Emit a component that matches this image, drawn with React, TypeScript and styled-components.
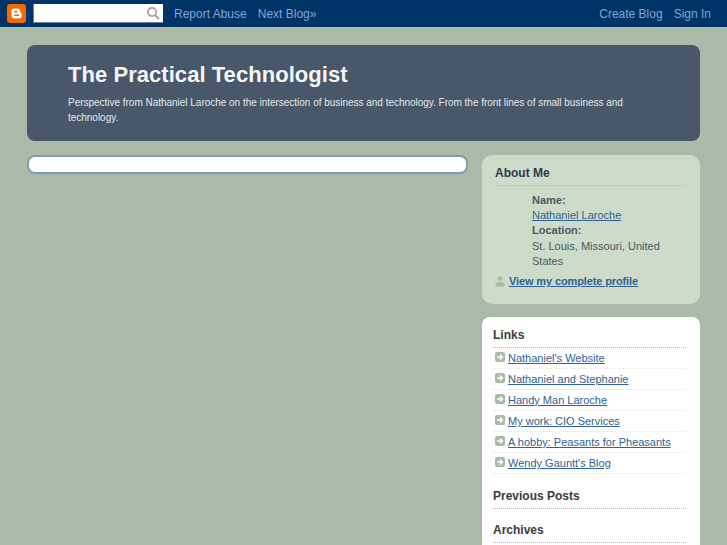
import React from "react";
import styled, { createGlobalStyle } from "styled-components";

const GlobalStyle = createGlobalStyle`
  html, body {
    margin: 0;
    padding: 0;
    height: 545px;
    overflow: hidden;
    background: #a9bba8;
    font-family: "Liberation Sans", Arial, sans-serif;
  }
`;

const NavBar = styled.div`
  display: flex;
  align-items: center;
  height: 27px;
  padding: 0 16px 0 7px;
  background: #003366;
  box-sizing: border-box;
`;

const LogoBox = styled.svg`
  width: 19px;
  height: 19px;
  margin-right: 7px;
  flex: none;
`;

const SearchBox = styled.div`
  display: flex;
  align-items: center;
  justify-content: flex-end;
  width: 130px;
  height: 19px;
  margin-right: 11px;
  padding-right: 3px;
  background: #fff;
  border-bottom: 1px solid #6f7f9c;
  border-left: 1px solid #6f7f9c;
  box-sizing: border-box;
`;

const NavLink = styled.a<{ $gap?: number }>`
  margin-right: ${(p) => p.$gap ?? 0}px;
  color: #7fa8d8;
  font-size: 12px;
  text-decoration: none;
`;

const Spacer = styled.div`
  flex: 1;
`;

const Content = styled.div`
  padding: 18px 27px 0;
`;

const Banner = styled.header`
  height: 96px;
  padding: 17px 41px 0;
  margin-bottom: 14px;
  background: #485769;
  border-radius: 8px;
  box-sizing: border-box;
`;

const BlogTitle = styled.h1`
  margin: 0 0 8px;
  color: #f4f6f6;
  font-size: 22px;
  line-height: 25px;
  font-weight: 700;
  letter-spacing: 0.05px;
`;

const Description = styled.p`
  margin: 0;
  color: #e4e8ea;
  font-size: 10px;
  line-height: 15px;
  letter-spacing: -0.02px;
`;

const Columns = styled.div`
  display: flex;
  align-items: flex-start;
  justify-content: space-between;
`;

const MainPanel = styled.main`
  width: 441px;
  height: 19px;
  background: #fff;
  border: 2px solid #8398b4;
  border-radius: 8px;
  box-sizing: border-box;
`;

const Sidebar = styled.aside`
  display: flex;
  flex-direction: column;
  gap: 13px;
  width: 218px;
`;

const ProfileCard = styled.section`
  height: 149px;
  padding: 11px 14px 0 13px;
  background: #ccdcc9;
  border-radius: 10px;
  box-sizing: border-box;
`;

const WhiteCard = styled.section`
  height: 240px;
  padding: 11px 14px 0 11px;
  background: #fff;
  border-radius: 8px 8px 0 0;
  box-sizing: border-box;
`;

const WidgetTitle = styled.h2<{ $dark?: boolean }>`
  margin: 0;
  padding-bottom: 4px;
  color: ${(p) => (p.$dark ? "#2c3a4c" : "#3c3c3c")};
  font-size: 12px;
  line-height: 15px;
  font-weight: 700;
  border-bottom: 1px dotted #b4c4b3;
`;

const ProfileInfo = styled.dl`
  margin: 7px 0 0 37px;
  color: #4a5866;
  font-size: 11px;
  line-height: 15.2px;
`;

const ProfileLabel = styled.dt`
  font-weight: 700;
`;

const ProfileValue = styled.dd`
  margin: 0;
`;

const BlueLink = styled.a<{ $bold?: boolean }>`
  color: #2f6296;
  font-weight: ${(p) => (p.$bold ? 700 : 400)};
  letter-spacing: ${(p) => (p.$bold ? "-0.12px" : "0")};
  text-decoration: underline;
`;

const ProfileLine = styled.div`
  display: flex;
  align-items: center;
  gap: 4px;
  margin-top: 5px;
  font-size: 11px;
  line-height: 15px;
`;

const LinkList = styled.ul`
  margin: 0;
  padding: 0;
  list-style: none;
`;

const LinkItem = styled.li`
  display: flex;
  align-items: center;
  gap: 3px;
  height: 21px;
  padding-left: 2px;
  font-size: 11px;
  border-bottom: 1px dotted #e2e8e1;
  box-sizing: border-box;
`;

const PlainTitle = styled(WidgetTitle)<{ $top: number }>`
  margin-top: ${(p) => p.$top}px;
`;

function BloggerLogo() {
  return (
    <LogoBox viewBox="0 0 19 19">
      <rect width="19" height="19" rx="3" fill="#f26a00" />
      <path
        d="M7.5 4.5h2.6a3 3 0 0 1 3 3v.6c0 .5.4.8.9.9.5 0 .7.4.7.9v1.6a3 3 0 0 1-3 3H7.5a3 3 0 0 1-3-3V7.5a3 3 0 0 1 3-3z"
        fill="#fff"
      />
      <rect x="7" y="7" width="3.4" height="1.4" rx=".7" fill="#f26a00" />
      <rect x="7" y="10.6" width="5.4" height="1.4" rx=".7" fill="#f26a00" />
    </LogoBox>
  );
}

function SearchIcon() {
  return (
    <svg width="14" height="14" viewBox="0 0 14 14">
      <circle cx="6" cy="6" r="4.2" fill="none" stroke="#a3a3a3" strokeWidth="1.7" />
      <path d="M9 9l4 4" stroke="#a3a3a3" strokeWidth="2.2" />
    </svg>
  );
}

function PersonIcon() {
  return (
    <svg width="10" height="11" viewBox="0 0 10 11">
      <circle cx="5" cy="2.6" r="2.4" fill="#a9bba8" />
      <path d="M0.5 10.5V8.2C0.5 6.6 2 6 5 6s4.5.6 4.5 2.2v2.3z" fill="#a9bba8" />
    </svg>
  );
}

function BulletIcon() {
  return (
    <svg width="10" height="10" viewBox="0 0 10 10" style={{ marginTop: -3, flex: "none" }}>
      <rect width="10" height="10" rx="2" fill="#a9bba8" />
      <path d="M2 5h5M5 2.6L7.5 5 5 7.4" fill="none" stroke="#fff" strokeWidth="1.4" />
    </svg>
  );
}

const links = [
  "Nathaniel's Website",
  "Nathaniel and Stephanie",
  "Handy Man Laroche",
  "My work: CIO Services",
  "A hobby: Peasants for Pheasants",
  "Wendy Gauntt's Blog",
];

export default function App() {
  return (
    <>
      <GlobalStyle />
      <NavBar>
        <BloggerLogo />
        <SearchBox>
          <SearchIcon />
        </SearchBox>
        <NavLink $gap={11}>Report Abuse</NavLink>
        <NavLink>Next Blog»</NavLink>
        <Spacer />
        <NavLink $gap={11}>Create Blog</NavLink>
        <NavLink>Sign In</NavLink>
      </NavBar>
      <Content>
        <Banner>
          <BlogTitle>The Practical Technologist</BlogTitle>
          <Description>
            Perspective from Nathaniel Laroche on the intersection of business and technology. From
            the front lines of small business and technology.
          </Description>
        </Banner>
        <Columns>
          <MainPanel />
          <Sidebar>
            <ProfileCard>
              <WidgetTitle $dark>About Me</WidgetTitle>
              <ProfileInfo>
                <ProfileLabel>Name:</ProfileLabel>
                <ProfileValue>
                  <BlueLink>Nathaniel Laroche</BlueLink>
                </ProfileValue>
                <ProfileLabel>Location:</ProfileLabel>
                <ProfileValue>St. Louis, Missouri, United States</ProfileValue>
              </ProfileInfo>
              <ProfileLine>
                <PersonIcon />
                <BlueLink $bold>View my complete profile</BlueLink>
              </ProfileLine>
            </ProfileCard>
            <WhiteCard>
              <WidgetTitle>Links</WidgetTitle>
              <LinkList>
                {links.map((l) => (
                  <LinkItem key={l}>
                    <BulletIcon />
                    <BlueLink>{l}</BlueLink>
                  </LinkItem>
                ))}
              </LinkList>
              <PlainTitle $top={15}>Previous Posts</PlainTitle>
              <PlainTitle $top={14}>Archives</PlainTitle>
            </WhiteCard>
          </Sidebar>
        </Columns>
      </Content>
    </>
  );
}
